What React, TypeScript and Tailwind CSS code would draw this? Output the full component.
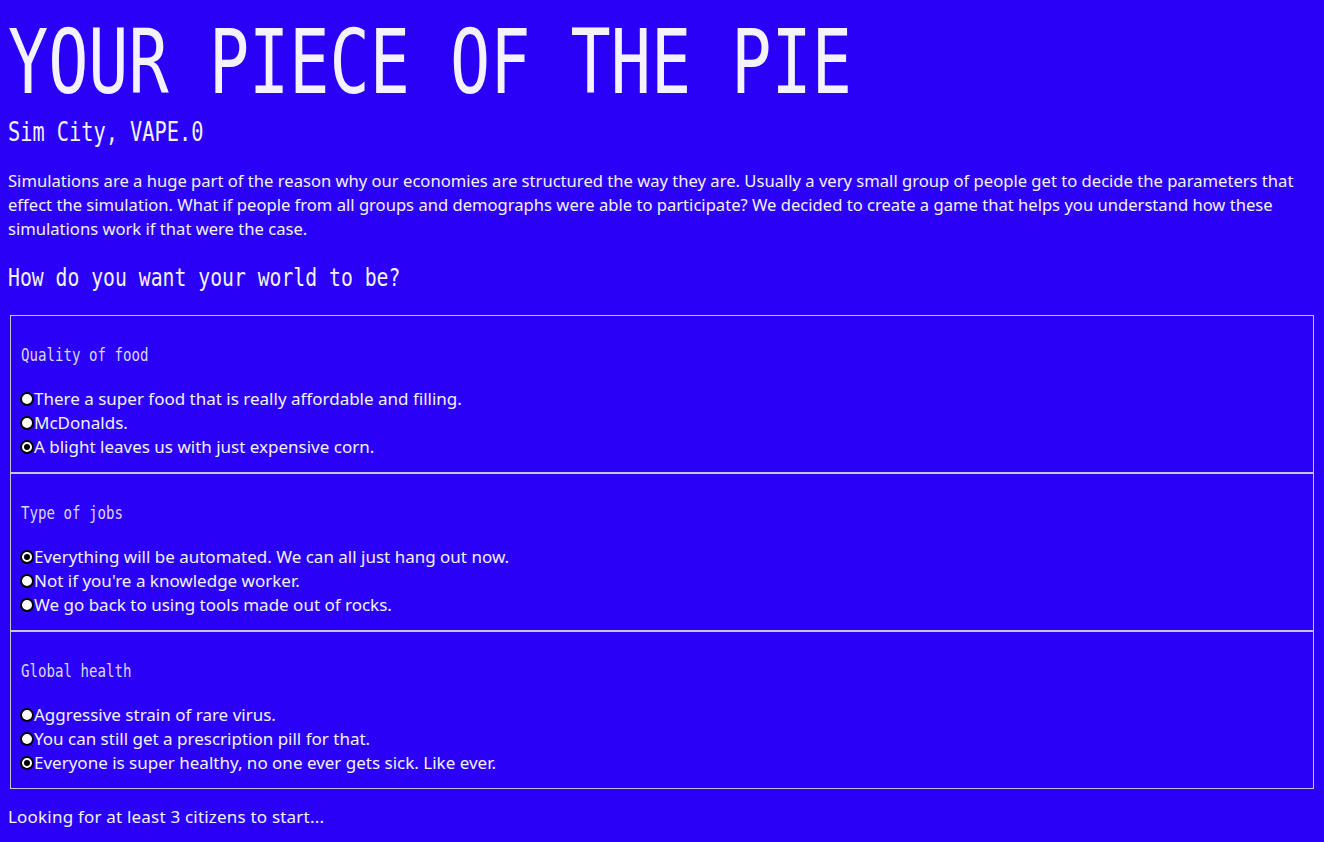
import React from "react";

const sections = [
  {
    title: "Quality of food",
    checked: 2,
    options: [
      "There a super food that is really affordable and filling.",
      "McDonalds.",
      "A blight leaves us with just expensive corn.",
    ],
  },
  {
    title: "Type of jobs",
    checked: 0,
    options: [
      "Everything will be automated. We can all just hang out now.",
      "Not if you're a knowledge worker.",
      "We go back to using tools made out of rocks.",
    ],
  },
  {
    title: "Global health",
    checked: 2,
    options: [
      "Aggressive strain of rare virus.",
      "You can still get a prescription pill for that.",
      "Everyone is super healthy, no one ever gets sick. Like ever.",
    ],
  },
];

function Radio({ checked }: { checked: boolean }) {
  return (
    <span className="flex h-[14px] w-[14px] shrink-0 items-center justify-center rounded-full border-2 border-black bg-white">
      {checked && <span className="h-[6px] w-[6px] rounded-full bg-black" />}
    </span>
  );
}

const mono = "font-['DejaVu_Sans_Mono',monospace]";

export default function App() {
  return (
    <div className="min-h-[842px] w-full bg-[#2a00f6] px-2 pt-[18px] pb-4 text-[#f4f2ff] font-['Noto_Sans',sans-serif]">
      <h1
        className={`${mono} origin-left scale-x-[0.75] whitespace-nowrap text-[89px] leading-none font-normal`}
      >
        YOUR PIECE OF THE PIE
      </h1>
      <h2
        className={`${mono} mt-[12px] origin-left scale-x-[0.78] whitespace-nowrap text-[26px] leading-none font-normal`}
      >
        Sim City, VAPE.0
      </h2>
      <p className="mt-[24px] text-[16.6px] leading-[24px]">
        Simulations are a huge part of the reason why our economies are structured the way they are. Usually a very
        small group of people get to decide the parameters that effect the simulation. What if people from all groups
        and demographs were able to participate? We decided to create a game that helps you understand how these
        simulations work if that were the case.
      </p>
      <h3
        className={`${mono} mt-[24px] origin-left scale-x-[0.79] whitespace-nowrap text-[25px] leading-none font-normal`}
      >
        How do you want your world to be?
      </h3>
      <div className="mx-[2px] mt-[25px] flex flex-col">
        {sections.map((s) => (
          <fieldset
            key={s.title}
            className="border border-[#c4c4cc] pl-[10px] pr-[10px] pt-[27px] pb-[13px]"
          >
            <div
              className={`${mono} origin-left scale-x-[0.83] whitespace-nowrap text-[17px] leading-[24px] text-[#dcd8ff]`}
            >
              {s.title}
            </div>
            <div className="mt-[20px] flex flex-col">
              {s.options.map((o, i) => (
                <label key={o} className="-ml-px flex h-[24px] items-center text-[17px] leading-[24px]">
                  <Radio checked={i === s.checked} />
                  <span>{o}</span>
                </label>
              ))}
            </div>
          </fieldset>
        ))}
      </div>
      <p className="mt-[16px] text-[17px] leading-[24px] tracking-[0.2px]">Looking for at least 3 citizens to start...</p>
    </div>
  );
}
